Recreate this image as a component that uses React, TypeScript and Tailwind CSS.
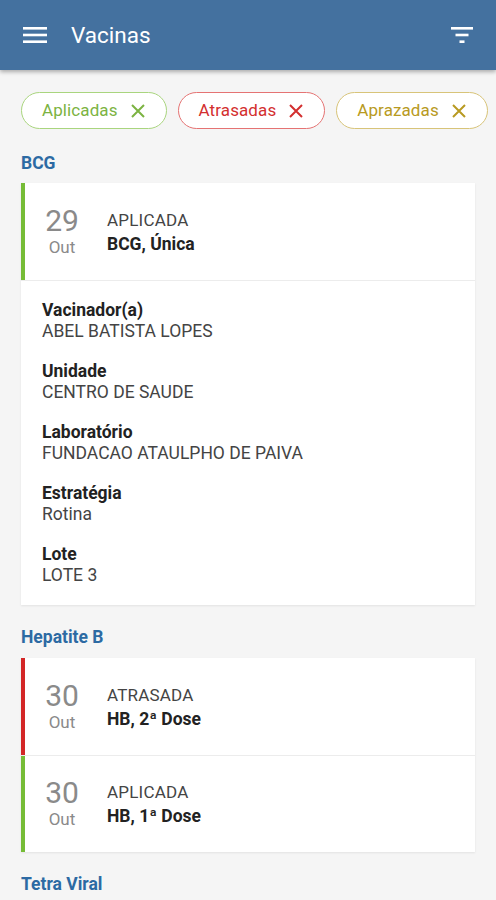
import React from 'react';

const font = { fontFamily: 'Roboto, "Liberation Sans", sans-serif' };

const Chip: React.FC<{ label: string; tone: 'green' | 'red' | 'gold' }> = ({ label, tone }) => {
    const cls =
        tone === 'green'
            ? 'border-[#a9d57e] text-[#7cb342]'
            : tone === 'red'
            ? 'border-[#e57373] text-[#d32f2f]'
            : 'border-[#d8c479] text-[#b89a22]';
    return (
        <div className={`flex items-center h-[37px] rounded-full border bg-white pl-[20px] pr-[20px] ${cls}`}>
            <span className="text-[17px] leading-none tracking-[0.1px]">{label}</span>
            <svg className="ml-[12px]" width="16" height="16" viewBox="0 0 16 16" fill="none" stroke="currentColor" strokeWidth="2">
                <path d="M2 2L14 14M14 2L2 14" />
            </svg>
        </div>
    );
};

type Dose = { day: string; month: string; status: string; name: string; color: string };

const DoseRow: React.FC<{ dose: Dose; divider?: boolean }> = ({ dose, divider }) => (
    <div className={`flex items-center h-[97px] ${divider ? 'border-t border-[#ececec]' : ''}`}>
        <div className={`w-[4px] self-stretch ${dose.color}`} />
        <div className="ml-[12px] w-[50px] flex flex-col items-center text-[#8a8a8a]">
            <span className="text-[30px] leading-[30px]">{dose.day}</span>
            <span className="text-[17px] leading-[22px]">{dose.month}</span>
        </div>
        <div className="ml-[20px] flex flex-col">
            <span className="text-[17px] leading-[24px] text-[#444] tracking-[0.2px]">{dose.status}</span>
            <span className="text-[17.5px] leading-[24px] font-bold text-[#222]">{dose.name}</span>
        </div>
    </div>
);

const details = [
    ['Vacinador(a)', 'ABEL BATISTA LOPES'],
    ['Unidade', 'CENTRO DE SAUDE'],
    ['Laboratório', 'FUNDACAO ATAULPHO DE PAIVA'],
    ['Estratégia', 'Rotina'],
    ['Lote', 'LOTE 3'],
];

const SectionTitle: React.FC<{ children: React.ReactNode; className?: string }> = ({ children, className }) => (
    <h2 className={`text-[17.5px] leading-[24px] font-bold text-[#2c6aa3] ${className ?? ''}`}>{children}</h2>
);

export default function App() {
    return (
        <div className="min-h-[900px] bg-[#f5f5f5] overflow-hidden" style={font}>
            <header className="h-[70px] bg-[#44719f] flex items-center px-[23px] shadow-[0_2px_4px_rgba(0,0,0,0.3)] relative">
                <svg width="24" height="18" viewBox="0 0 24 18" fill="white">
                    <rect x="0" y="1" width="24" height="2.6" />
                    <rect x="0" y="7.7" width="24" height="2.6" />
                    <rect x="0" y="14.4" width="24" height="2.6" />
                </svg>
                <h1 className="ml-[24px] text-white text-[22.5px] leading-none">Vacinas</h1>
                <svg className="ml-auto" width="22" height="18" viewBox="0 0 22 18" fill="white">
                    <rect x="0" y="1" width="22" height="2.6" />
                    <rect x="4.5" y="7.7" width="13" height="2.6" />
                    <rect x="8.5" y="14.4" width="5" height="2.6" />
                </svg>
            </header>

            <main className="px-[21px] pt-[22px]">
                <div className="flex gap-[11px]">
                    <Chip label="Aplicadas" tone="green" />
                    <Chip label="Atrasadas" tone="red" />
                    <Chip label="Aprazadas" tone="gold" />
                </div>

                <SectionTitle className="mt-[22px] mb-[8px]">BCG</SectionTitle>
                <div className="bg-white shadow-[0_1px_2px_rgba(0,0,0,0.08)]">
                    <DoseRow dose={{ day: '29', month: 'Out', status: 'APLICADA', name: 'BCG, Única', color: 'bg-[#76bc36]' }} />
                    <div className="border-t border-[#ececec] px-[21px] pt-[19px] pb-[19px] flex flex-col gap-[19px]">
                        {details.map(([label, value]) => (
                            <div key={label} className="text-[17.5px] leading-[21px]">
                                <div className="font-bold text-[#222]">{label}</div>
                                <div className="text-[#444]">{value}</div>
                            </div>
                        ))}
                    </div>
                </div>

                <SectionTitle className="mt-[20px] mb-[9px]">Hepatite B</SectionTitle>
                <div className="bg-white shadow-[0_1px_2px_rgba(0,0,0,0.08)]">
                    <DoseRow dose={{ day: '30', month: 'Out', status: 'ATRASADA', name: 'HB, 2ª Dose', color: 'bg-[#d32626]' }} />
                    <DoseRow divider dose={{ day: '30', month: 'Out', status: 'APLICADA', name: 'HB, 1ª Dose', color: 'bg-[#76bc36]' }} />
                </div>

                <SectionTitle className="mt-[20px]">Tetra Viral</SectionTitle>
            </main>
        </div>
    );
}
